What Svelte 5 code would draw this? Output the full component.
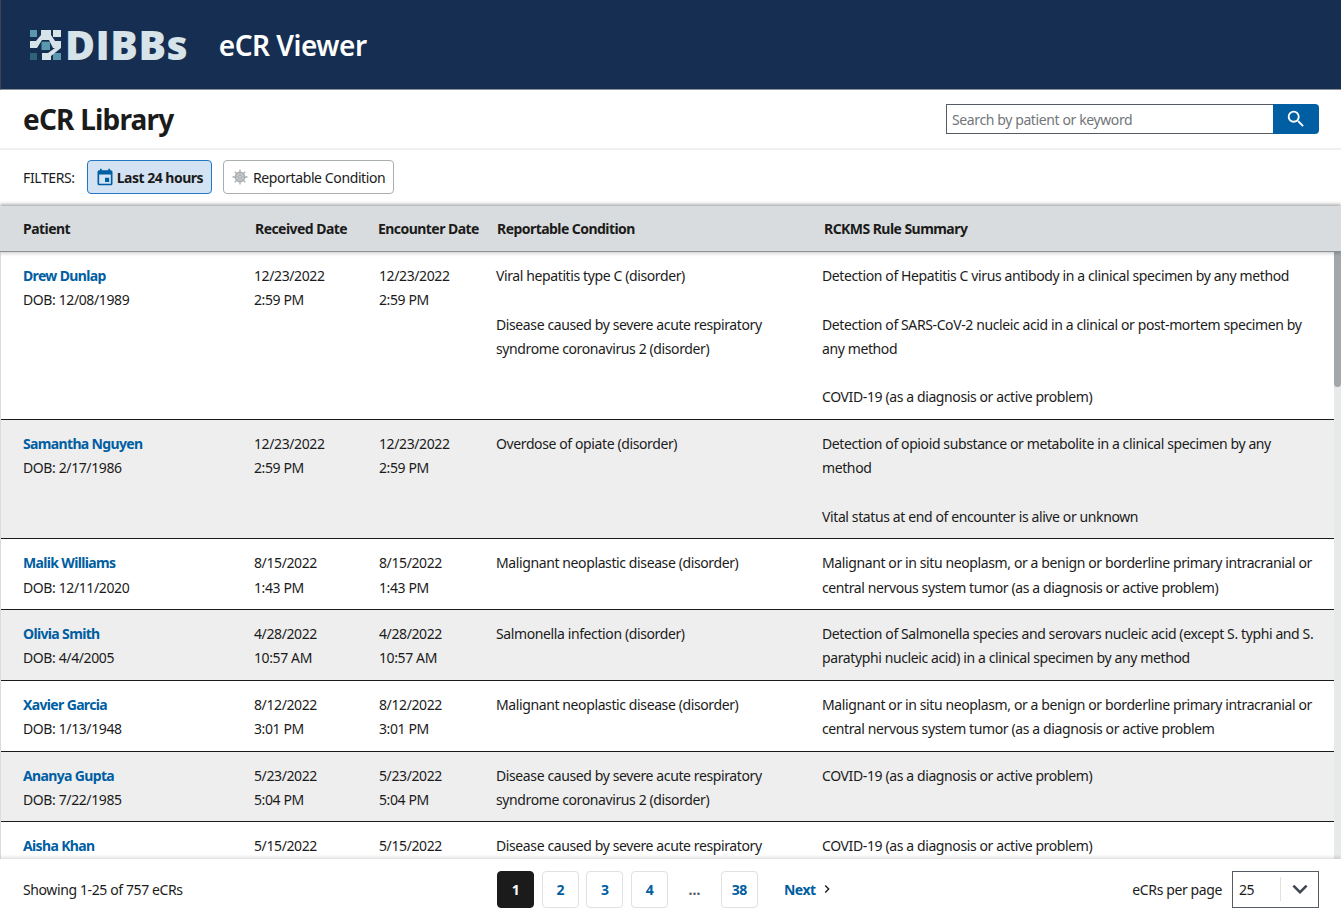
<script lang="ts">
  const rows = [
    {
      name: 'Drew Dunlap', dob: '12/08/1989', date: '12/23/2022', time: '2:59 PM',
      conditions: ['Viral hepatitis type C (disorder)', 'Disease caused by severe acute respiratory syndrome coronavirus 2 (disorder)'],
      rules: ['Detection of Hepatitis C virus antibody in a clinical specimen by any method', 'Detection of SARS-CoV-2 nucleic acid in a clinical or post-mortem specimen by any method', 'COVID-19 (as a diagnosis or active problem)'],
    },
    {
      name: 'Samantha Nguyen', dob: '2/17/1986', date: '12/23/2022', time: '2:59 PM',
      conditions: ['Overdose of opiate (disorder)'],
      rules: ['Detection of opioid substance or metabolite in a clinical specimen by any method', 'Vital status at end of encounter is alive or unknown'],
    },
    {
      name: 'Malik Williams', dob: '12/11/2020', date: '8/15/2022', time: '1:43 PM',
      conditions: ['Malignant neoplastic disease (disorder)'],
      rules: ['Malignant or in situ neoplasm, or a benign or borderline primary intracranial or central nervous system tumor (as a diagnosis or active problem)'],
    },
    {
      name: 'Olivia Smith', dob: '4/4/2005', date: '4/28/2022', time: '10:57 AM',
      conditions: ['Salmonella infection (disorder)'],
      rules: ['Detection of Salmonella species and serovars nucleic acid (except S. typhi and S. paratyphi nucleic acid) in a clinical specimen by any method'],
    },
    {
      name: 'Xavier Garcia', dob: '1/13/1948', date: '8/12/2022', time: '3:01 PM',
      conditions: ['Malignant neoplastic disease (disorder)'],
      rules: ['Malignant or in situ neoplasm, or a benign or borderline primary intracranial or central nervous system tumor (as a diagnosis or active problem'],
    },
    {
      name: 'Ananya Gupta', dob: '7/22/1985', date: '5/23/2022', time: '5:04 PM',
      conditions: ['Disease caused by severe acute respiratory syndrome coronavirus 2 (disorder)'],
      rules: ['COVID-19 (as a diagnosis or active problem)'],
    },
    // last row runs under the footer, only its first line shows
    {
      name: 'Aisha Khan', date: '5/15/2022',
      conditions: ['Disease caused by severe acute respiratory'],
      rules: ['COVID-19 (as a diagnosis or active problem)'],
    },
  ]
  const pages = ['1', '2', '3', '4']
</script>

<div class="page">
  <header class="banner">
    <div class="logo">
      <svg width="31" height="30" viewBox="0 0 31 30" aria-hidden="true">
        <rect x="0" y="0" width="7" height="7" fill="#5b97ad" />
        <rect x="23" y="0" width="8" height="7" fill="#d6e4ea" />
        <rect x="0" y="23" width="7" height="7" fill="#2f6478" />
        <rect x="23" y="23" width="8" height="7" fill="#5b97ad" />
        <path d="M0 11H6L11 5V0H21V5L25 11H31V18H23L19 10H12L7 18H0z" fill="#d6e4ea" />
        <path d="M25 18H31L21 26V30H12V23H18z" fill="#d6e4ea" />
        <rect x="11.500" y="11.700" width="8.500" height="8.300" fill="#5b97ad" />
      </svg>
      <span class="wordmark">DIBBs</span>
    </div>
    <span class="product">eCR Viewer</span>
  </header>

  <div class="title-row">
    <h1>eCR Library</h1>
    <form class="search" onsubmit={(e) => e.preventDefault()}>
      <input type="text" placeholder="Search by patient or keyword" />
      <button type="submit" aria-label="Search">
        <svg width="22" height="22" viewBox="0 0 24 24" fill="#fff">
          <path d="M15.500 14h-.79l-.28-.27A6.470 6.470 0 0 0 16 9.500 6.500 6.500 0 1 0 9.500 16c1.610 0 3.090-.59 4.230-1.570l.27.28v.79l5 4.990L20.490 19l-4.990-5zm-6 0C7.010 14 5 11.990 5 9.500S7.010 5 9.500 5 14 7.010 14 9.500 11.990 14 9.500 14z" />
        </svg>
      </button>
    </form>
  </div>

  <div class="filters">
    <span class="filters-label">FILTERS:</span>
    <button class="chip chip--active">
      <svg width="20" height="20" viewBox="0 0 24 24" fill="#005ea2">
        <path d="M19 4h-1V2h-2v2H8V2H6v2H5a2 2 0 0 0-2 2v14a2 2 0 0 0 2 2h14a2 2 0 0 0 2-2V6a2 2 0 0 0-2-2zm0 16H5V9h14v11zm-7-7h5v5h-5z" />
      </svg>
      Last 24 hours
    </button>
    <button class="chip">
      <svg class="chip-virus" width="18" height="18" viewBox="0 0 24 24" fill="none" stroke="#a9aeb1" aria-hidden="true">
        <circle cx="12" cy="12" r="6" stroke-width="2.500" />
        <circle cx="12" cy="12" r="2" fill="#a9aeb1" stroke="none" />
        <path d="M12 2v20M2 12h20M5 5l14 14M19 5L5 19" stroke-width="1.800" />
        <circle cx="12" cy="12" r="1" fill="#fff" stroke="none" />
      </svg>
      Reportable Condition
    </button>
  </div>

  <div class="table-head">
    <span>Patient</span>
    <span>Received Date</span>
    <span>Encounter Date</span>
    <span>Reportable Condition</span>
    <span>RCKMS Rule Summary</span>
  </div>

  <main class="table-body">
    {#each rows as row, i}
      <div class="row" class:row--alt={i % 2 === 1}>
        <div class="cell">
          <a href="#patient" class="patient">{row.name}</a>
          {#if row.dob}<div>DOB: {row.dob}</div>{/if}
        </div>
        <div class="cell">{row.date}{#if row.time}<br />{row.time}{/if}</div>
        <div class="cell">{row.date}{#if row.time}<br />{row.time}{/if}</div>
        <div class="cell stack">
          {#each row.conditions as text}<p>{text}</p>{/each}
        </div>
        <div class="cell stack">
          {#each row.rules as text}<p>{text}</p>{/each}
        </div>
      </div>
    {/each}
    <div class="scroll-thumb"></div>
  </main>

  <footer class="pager">
    <span class="pager-count">Showing 1-25 of 757 eCRs</span>
    <nav class="pager-nav">
      {#each pages as p, i}
        <a href="#page" class="page-btn" class:page-btn--current={i === 0}>{p}</a>
      {/each}
      <span class="ellipsis">…</span>
      <a href="#page" class="page-btn">38</a>
      <a href="#next" class="next">
        Next
        <svg width="16" height="16" viewBox="0 0 24 24" fill="#1b1b1b">
          <path d="M10 6L8.590 7.410 13.170 12l-4.580 4.590L10 18l6-6z" />
        </svg>
      </a>
    </nav>
    <div class="per-page">
      <span>eCRs per page</span>
      <div class="select">
        <span class="select-value">25</span>
        <span class="select-arrow">
          <svg width="30" height="30" viewBox="0 0 24 24" fill="#3d4551">
            <path d="M16.590 8.590 12 13.170 7.410 8.590 6 10l6 6 6-6z" />
          </svg>
        </span>
      </div>
    </div>
  </footer>
</div>

<style>
  :global(body) {
    margin: 0;
    background: #fff;
    color: #1b1b1b;
    font-family: 'Noto Sans', 'Liberation Sans', sans-serif;
  }

  .page {
    height: 919px;
    display: flex;
    flex-direction: column;
    overflow: hidden;
    font-size: 14px;
    letter-spacing: -0.39px;
  }

  .banner {
    height: 89px;
    flex: none;
    display: flex;
    align-items: center;
    gap: 30.500px;
    padding-left: 29px;
    background: #162e51;
    border-bottom: 1px solid #8d9297;
    border-left: 1px solid #3d4551;
  }

  .logo {
    display: flex;
    align-items: center;
    gap: 4px;
  }

  .wordmark {
    font-family: 'Open Sans', sans-serif;
    font-size: 41px;
    line-height: 1;
    font-weight: 800;
    letter-spacing: 0.500px;
    color: #d6e4ea;
  }

  .product {
    font-size: 28px;
    font-weight: 600;
    letter-spacing: -0.500px;
    color: #fff;
  }

  .title-row {
    height: 60px;
    flex: none;
    box-sizing: border-box;
    display: flex;
    align-items: center;
    justify-content: space-between;
    padding: 0 22px 0 23px;
    border-bottom: 2px solid #f0f0f0;
  }

  h1 {
    margin: 0;
    font-size: 28px;
    font-weight: 700;
    letter-spacing: -0.800px;
    color: #1b1b1b;
  }

  .search {
    display: flex;
    height: 30px;
  }

  .search input {
    width: 327px;
    box-sizing: border-box;
    margin: 0;
    padding: 0 5px;
    border: 1px solid #565c65;
    border-right: 0;
    border-radius: 0;
    font: inherit;
    letter-spacing: inherit;
    color: #1b1b1b;
    outline: none;
  }

  .search input::placeholder {
    color: #71767a;
    opacity: 1;
  }

  .search button {
    width: 46px;
    display: flex;
    align-items: center;
    justify-content: center;
    padding: 0;
    border: 0;
    border-radius: 0 4px 4px 0;
    background: #005ea2;
  }

  .filters {
    height: 56px;
    flex: none;
    box-sizing: border-box;
    display: flex;
    align-items: center;
    gap: 11px;
    padding: 0 0 2px 23px;
  }

  .filters-label {
    margin-right: 1px;
  }

  .chip {
    height: 34px;
    box-sizing: border-box;
    display: flex;
    align-items: center;
    gap: 2px;
    padding: 0 8px 0 7px;
    border: 1px solid #a9aeb1;
    border-radius: 4px;
    background: #fff;
    font: inherit;
    letter-spacing: inherit;
    color: #1b1b1b;
  }

  .chip-virus {
    margin-right: 2px;
  }

  .chip--active {
    border-color: #2378c3;
    background: #d3e3f4;
    font-weight: 700;
    letter-spacing: -0.500px;
  }

  .table-head {
    height: 46px;
    flex: none;
    display: grid;
    grid-template-columns: 255px 123px 119px 327px 1fr;
    align-items: center;
    box-sizing: border-box;
    background: #d9dcde;
    border-bottom: 1px solid #8d9297;
    box-shadow: 0 -2px 3px rgba(0, 0, 0, 0.3), 0 2px 3px rgba(0, 0, 0, 0.15);
    font-weight: 700;
    letter-spacing: -0.550px;
    position: relative;
    z-index: 2;
  }

  .table-head span:first-child {
    padding-left: 23px;
  }

  .table-body {
    flex: 1;
    min-height: 0;
    overflow: hidden;
    position: relative;
    padding-right: 7px;
    background: #e8e9ea;
    border-left: 1px solid #d9dcde;
  }

  .row {
    display: grid;
    grid-template-columns: 253px 125px 117px 326px 1fr;
    border-bottom: 1px solid #1b1b1b;
    background: #fff;
    line-height: 24.300px;
    padding: 12px 0 9.200px;
  }

  .row--alt {
    background: #eeeeee;
  }

  .cell:first-child {
    padding-left: 22px;
  }

  .stack {
    padding-right: 14px;
  }

  .stack p {
    margin: 0 0 24.300px;
  }

  .stack p:last-child {
    margin-bottom: 0;
  }

  .patient {
    display: block;
    font-weight: 700;
    letter-spacing: -0.650px;
    color: #005ea2;
    text-decoration: none;
  }

  .scroll-thumb {
    position: absolute;
    top: 0;
    right: 0;
    width: 7px;
    height: 135px;
    border-radius: 0 0 4px 4px;
    background: #a3a7aa;
  }

  .pager {
    height: 60px;
    flex: none;
    display: grid;
    grid-template-columns: 474px auto 1fr;
    align-items: center;
    padding: 0 22px 0 23px;
    background: #fff;
    box-shadow: 0 -2px 3px rgba(0, 0, 0, 0.12);
    position: relative;
    z-index: 2;
  }

  .pager-nav {
    display: flex;
    align-items: center;
    gap: 7.670px;
    font-weight: 700;
    letter-spacing: -0.500px;
  }

  .page-btn {
    width: 37px;
    height: 37px;
    box-sizing: border-box;
    display: flex;
    align-items: center;
    justify-content: center;
    border: 1px solid #dfe1e2;
    border-radius: 4px;
    color: #005ea2;
    text-decoration: none;
  }

  .page-btn--current {
    background: #1b1b1b;
    border-color: #1b1b1b;
    color: #fff;
  }

  .ellipsis {
    width: 37.400px;
    text-align: center;
    color: #565c65;
  }

  .next {
    display: flex;
    align-items: center;
    gap: 3px;
    margin-left: 18.600px;
    color: #005ea2;
    text-decoration: none;
  }

  .per-page {
    display: flex;
    align-items: center;
    justify-content: flex-end;
    gap: 10px;
  }

  .select {
    width: 87px;
    height: 37px;
    box-sizing: border-box;
    display: flex;
    align-items: center;
    justify-content: space-between;
    padding-left: 6px;
    border: 1px solid #565c65;
  }

  .select-arrow {
    width: 37px;
    height: 24px;
    display: flex;
    align-items: center;
    justify-content: center;
    border-left: 1px solid #dfe1e2;
  }

  .select-arrow svg {
    flex: none;
  }
</style>
